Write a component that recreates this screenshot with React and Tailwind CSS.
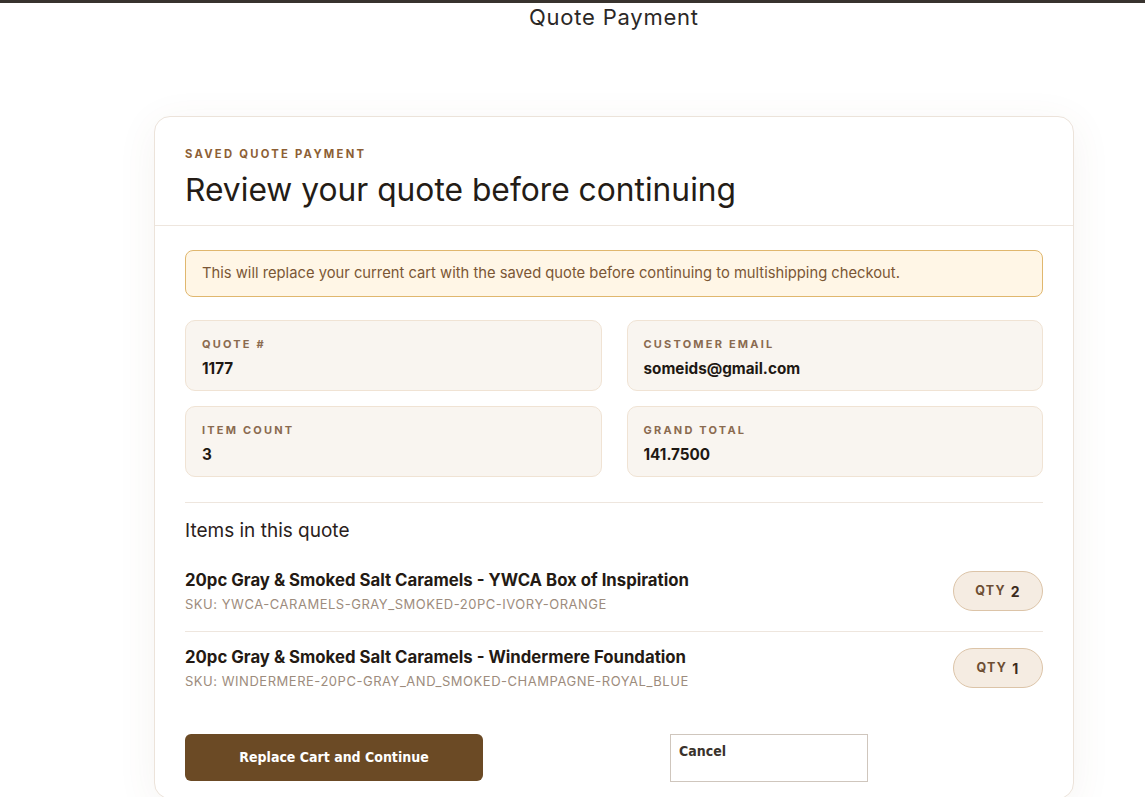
export default function App() {
  const items = [
    {
      name: '20pc Gray & Smoked Salt Caramels - YWCA Box of Inspiration',
      sku: 'YWCA-CARAMELS-GRAY_SMOKED-20PC-IVORY-ORANGE',
      qty: 2,
    },
    {
      name: '20pc Gray & Smoked Salt Caramels - Windermere Foundation',
      sku: 'WINDERMERE-20PC-GRAY_AND_SMOKED-CHAMPAGNE-ROYAL_BLUE',
      qty: 1,
    },
  ];

  const facts = [
    { label: 'Quote #', value: '1177' },
    { label: 'Customer Email', value: 'someids@gmail.com' },
    { label: 'Item Count', value: '3' },
    { label: 'Grand Total', value: '141.7500' },
  ];

  return (
    <div className="min-h-screen bg-white font-['Inter',sans-serif] text-[#2a211b]">
      <div className="h-[3px] bg-[#38332e]" />
      <h1 className="pl-[529px] text-[22px] leading-[28px] tracking-[0.035em] text-[#2b2826]">
        Quote Payment
      </h1>

      <div className="ml-[154px] mt-[85px] w-[920px] bg-white border border-[#ece3da] rounded-[16px] shadow-[0_8px_40px_rgba(120,90,60,0.07)]">
        {/* Header */}
        <div className="px-[30px] pt-[29px] pb-[15px] border-b border-[#eee6de]">
          <div className="text-[11.25px] leading-[16px] font-bold tracking-[0.2em] uppercase text-[#8d5f35]">Saved Quote Payment</div>
          <h2 className="mt-[8px] text-[31.75px] leading-[40px] text-[#241c16]">Review your quote before continuing</h2>
        </div>

        {/* Body */}
        <div className="px-[30px] pt-[24px] pb-[16px]">
          <div className="rounded-[8px] border border-[#e0b76e] bg-[#fff6e6] px-[16px] py-[13px] text-[14.75px] leading-[19px] text-[#7b5735]">
            This will replace your current cart with the saved quote before continuing to multishipping checkout.
          </div>

          <div className="grid grid-cols-2 gap-x-[25px] gap-y-[15px] mt-[23px]">
            {facts.map(f => (
              <div key={f.label} className="h-[71px] rounded-[10px] border border-[#f0e3d4] bg-[#f9f5f0] px-[16px] pt-[15px]">
                <div className="text-[11px] font-bold tracking-[0.2em] uppercase text-[#8a6a4f] leading-[16px]">{f.label}</div>
                <div className="mt-[8px] text-[15.25px] font-bold leading-[18px] text-[#1e1813]">{f.value}</div>
              </div>
            ))}
          </div>

          <div className="mt-[25px] border-t border-[#eee6de] pt-[16px]">
            <h3 className="text-[19px] leading-[24px] text-[#2a211b]">Items in this quote</h3>
            <div className="mt-[15px]">
              {items.map((it, i) => (
                <div
                  key={it.sku}
                  className={`flex items-center justify-between pb-[19px] ${i > 0 ? 'border-t border-[#eee6de] pt-[15px]' : 'pt-[12px]'}`}
                >
                  <div className="flex flex-col gap-[6px]">
                    <div className="text-[16.75px] font-bold leading-[20px] text-[#241a13]">{it.name}</div>
                    <div className="text-[13px] leading-[16px] tracking-[0.04em] uppercase text-[#9d8c7d]">SKU: {it.sku}</div>
                  </div>
                  <div className="w-[90px] h-[40px] rounded-full border border-[#dcc4a8] bg-[#f5ece2] flex items-center justify-center text-[12.5px] font-bold tracking-[0.1em] text-[#6d4e33]">
                    QTY <span className="ml-[5px] text-[14px] text-[#3b2a1c]">{it.qty}</span>
                  </div>
                </div>
              ))}
            </div>
          </div>

          <div className="flex items-start mt-[26px]">
            <button className="w-[298px] h-[47px] rounded-[6px] bg-[#6b4a25] text-white font-['DejaVu_Sans_Condensed',sans-serif] font-bold text-[14px]">
              Replace Cart and Continue
            </button>
            <div className="ml-[187px] w-[198px] h-[48px] border border-[#cfc6bd] px-[8px] pt-[7px] font-['DejaVu_Sans_Condensed',sans-serif] font-bold text-[14px] leading-[18px] text-[#3a332c]">
              Cancel
            </div>
          </div>
        </div>
      </div>
    </div>
  );
}
